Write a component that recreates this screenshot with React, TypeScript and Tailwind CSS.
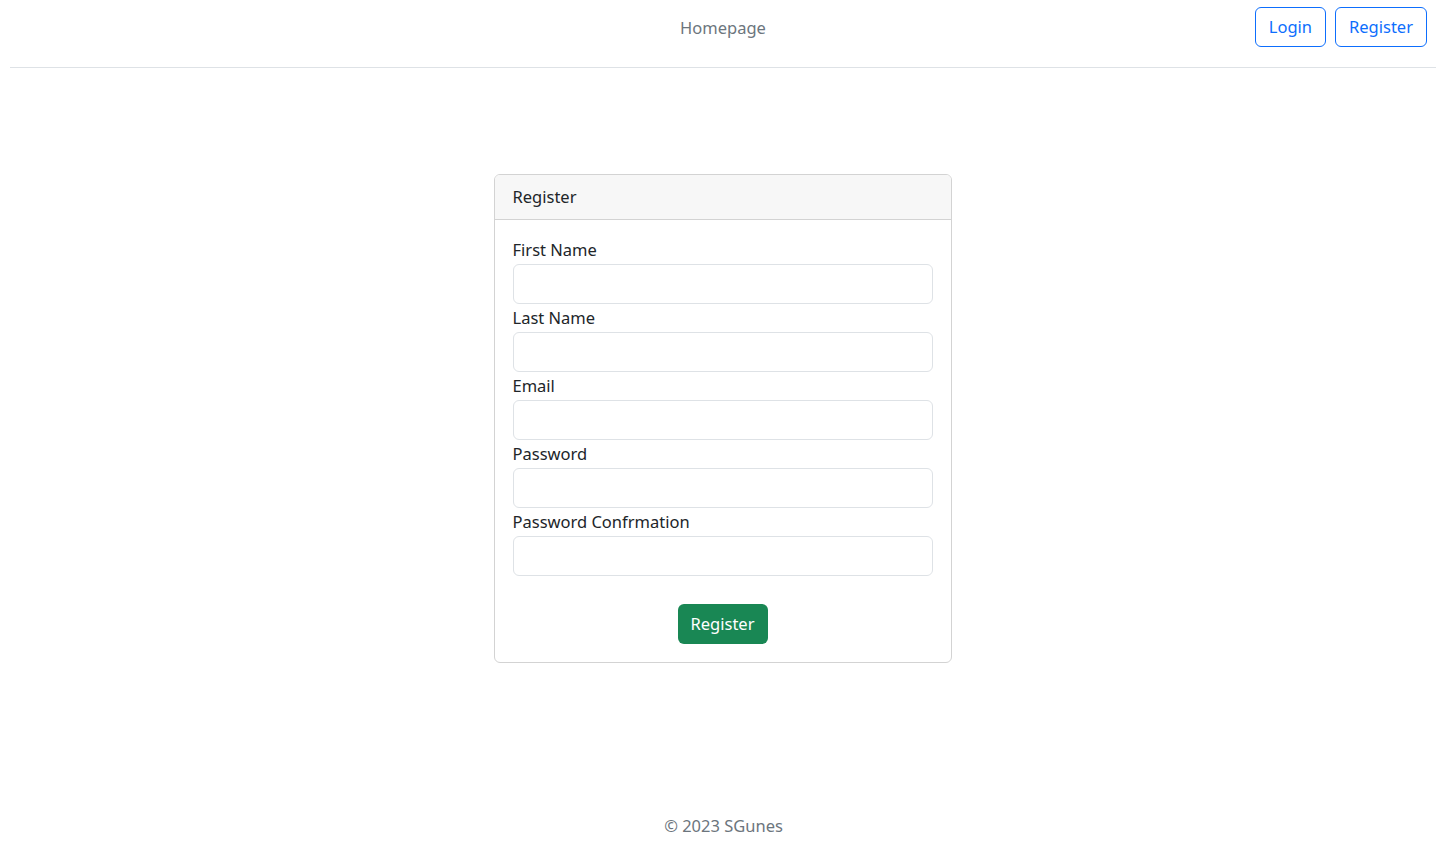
import React from 'react';

const fields = ['First Name', 'Last Name', 'Email', 'Password', 'Password Confrmation'];

export default function App() {
    return (
        <div className="min-h-[842px] bg-white text-[#212529] font-['Noto_Sans',sans-serif] text-[16.5px] flex flex-col">
            {/* Top nav */}
            <header className="ml-[10px] mr-[14px] h-[68px] border-b border-[#dee2e6] grid grid-cols-3 items-start">
                <div />
                <div className="flex justify-center pt-[16px]">
                    <a className="text-[#6c757d] leading-6">Homepage</a>
                </div>
                <div className="flex justify-end gap-[9px] pt-[7px] pr-[9px]">
                    <button className="h-10 px-[13px] rounded-md border border-[#0d6efd] text-[#0d6efd]">Login</button>
                    <button className="h-10 px-[13px] rounded-md border border-[#0d6efd] text-[#0d6efd]">Register</button>
                </div>
            </header>

            {/* Register card */}
            <main className="flex justify-center pt-[106px] pr-[5px]">
                <div className="w-[458px] border border-[#d3d3d3] rounded-md overflow-hidden">
                    <div className="h-[45px] px-[18px] pt-[1px] flex items-center bg-[#f7f7f7] border-b border-[#d3d3d3]">
                        Register
                    </div>
                    <form className="px-[18px] pt-[18px] pb-[18px] flex flex-col">
                        {fields.map((f, i) => (
                            <div key={f} className={i > 0 ? 'mt-[2px]' : ''}>
                                <label className="block leading-6 mb-[2px]">{f}</label>
                                <input className="block w-full h-10 rounded-md border border-[#dee2e6] px-3 outline-none" />
                            </div>
                        ))}
                        <div className="flex justify-center mt-[28px]">
                            <button type="button" className="h-10 w-[90px] rounded-md bg-[#198754] text-white">
                                Register
                            </button>
                        </div>
                    </form>
                </div>
            </main>

            {/* Footer */}
            <footer className="mt-auto pb-[4px] pr-[3px] flex justify-center">
                <p className="text-[#6c757d] leading-6">© 2023 SGunes</p>
            </footer>
        </div>
    );
}
